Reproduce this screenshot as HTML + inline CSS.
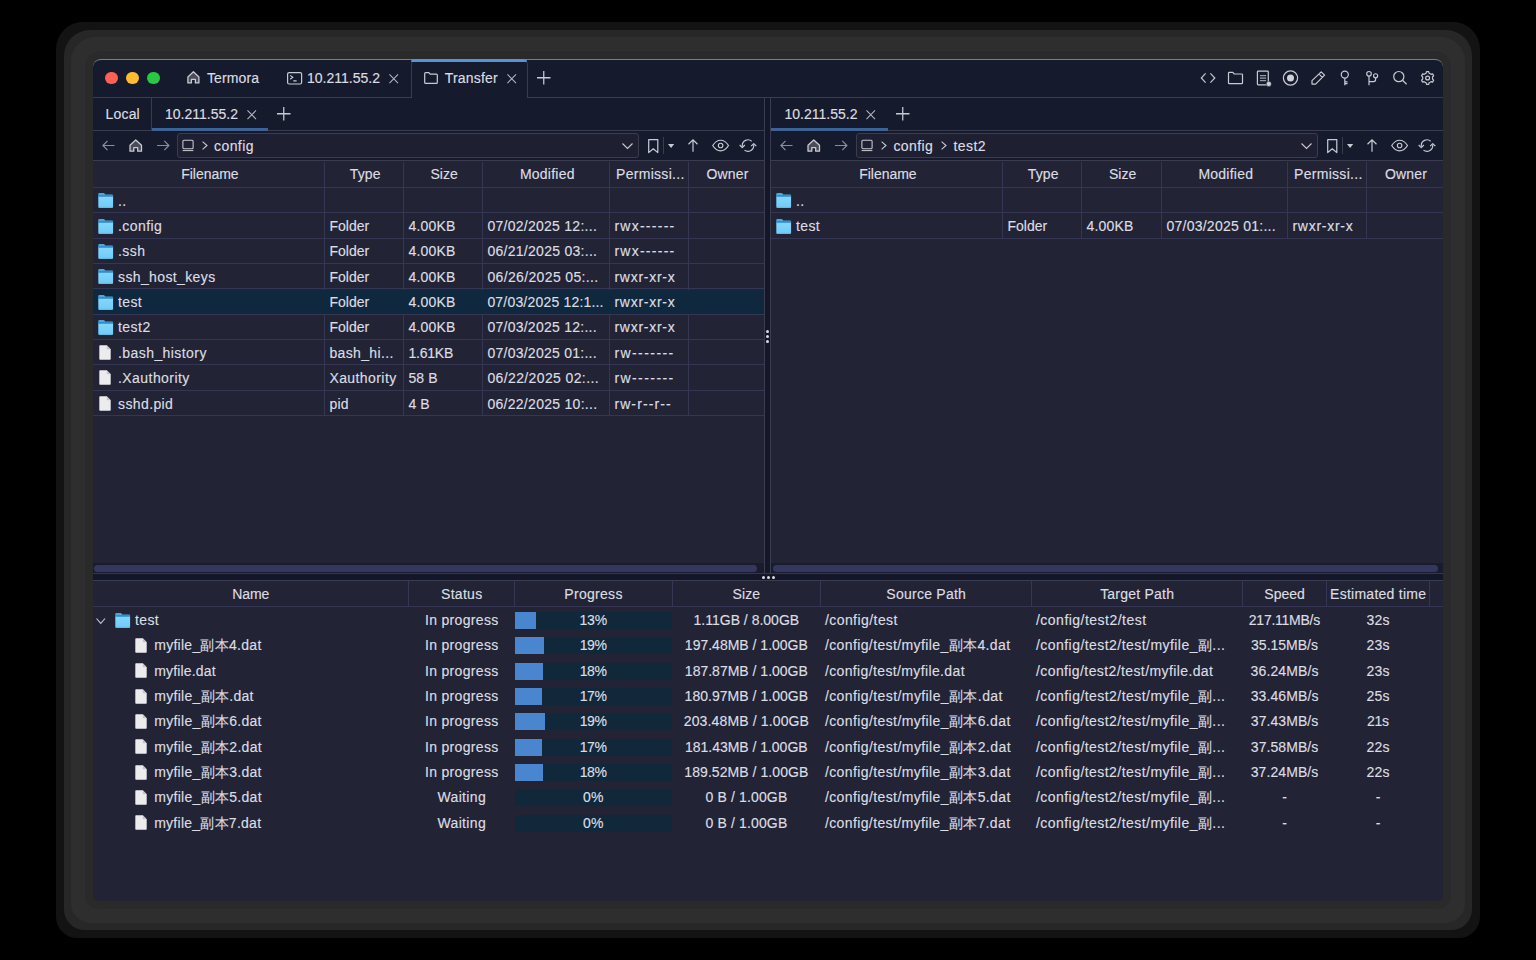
<!DOCTYPE html><html><head><meta charset="utf-8"><style>
*{margin:0;padding:0;box-sizing:border-box}
html,body{width:1536px;height:960px;background:#000;overflow:hidden}
body{position:relative;font-family:"Liberation Sans", sans-serif;font-size:14px;color:#dcdde2}
.a{position:absolute}
.t{position:absolute;white-space:nowrap;line-height:16px;height:16px;-webkit-text-stroke:0.15px #dcdde2}
.c{text-align:center}
svg{position:absolute;overflow:visible}
.hl{position:absolute;height:1px;background:#3a3c50}
.vl{position:absolute;width:1px;background:#3a3c50}
.gl{position:absolute;height:1px;background:#343653}
.gv{position:absolute;width:1px;background:#343653}
</style></head><body><svg style="position:absolute;left:0;top:0" width="0" height="0"><defs><linearGradient id="fg" x1="0" y1="0" x2="0" y2="1"><stop offset="0" stop-color="#82d7fc"/><stop offset="0.85" stop-color="#74cdf8"/><stop offset="1" stop-color="#58b6ea"/></linearGradient></defs></svg><div class="a" style="left:93px;top:59px;width:1350px;height:841.7px;border-radius:8px 8px 6px 6px;box-shadow:0 0 0 8px #2a2a2a,0 0 0 22px #2e2e2e,0 0 0 29px #272727,0 0 0 37px #131313"></div><div class="a" style="left:93px;top:59px;width:1350px;height:841.7px;border-radius:8px 8px 6px 6px;background:#222435"></div><div class="a" style="left:93px;top:59px;width:1350px;height:38px;border-radius:8px 8px 0 0;background:#161a2d;border-top:1px solid #7a7c8e"></div><div class="a" style="left:93px;top:97px;width:1350px;height:1px;background:#3a3c50;"></div><div class="a" style="left:105.2px;top:71.5px;width:12.6px;height:12.6px;border-radius:50%;background:#fe5f57"></div><div class="a" style="left:126.2px;top:71.5px;width:12.6px;height:12.6px;border-radius:50%;background:#febc2e"></div><div class="a" style="left:147.2px;top:71.5px;width:12.6px;height:12.6px;border-radius:50%;background:#28c840"></div><svg style="left:187.3px;top:71.4px" width="13" height="13" viewBox="0 0 13 13"><path d="M0.9 5.9 L6.4 0.8 L11.9 5.9 V11.9 H8.4 V8.4 H4.4 V11.9 H0.9 Z" fill="#4a4c5a" stroke="#c9cad2" stroke-width="1.3" stroke-linejoin="round"/></svg><div class="t" style="left:207px;top:70.3px;letter-spacing:0.12px;">Termora</div><svg style="left:286.7px;top:71.6px" width="16" height="13" viewBox="0 0 16 13"><rect x="0.6" y="0.6" width="14" height="11.4" rx="1.5" fill="none" stroke="#c9cad2" stroke-width="1.2"/><path d="M3.2 3.4 L5.8 5.3 L3.2 7.2 M6.3 8.9 H9.6" fill="none" stroke="#c9cad2" stroke-width="1.1"/></svg><div class="t" style="left:307px;top:70.3px;">10.211.55.2</div><svg style="left:388.8px;top:74.2px" width="9.5" height="9.5" viewBox="0 0 10 10"><path d="M0.5 0.5 L9.5 9.5 M9.5 0.5 L0.5 9.5" stroke="#b5b6bf" stroke-width="1.1"/></svg><div class="a" style="left:410.5px;top:59px;width:117px;height:39px;background:#161a2d;border-left:1px solid #3a3c50;border-right:1px solid #3a3c50;border-radius:6px 6px 0 0"></div><div class="a" style="left:411px;top:59px;width:116px;height:3px;background:#5a92d8;border-radius:4px 4px 0 0"></div><svg style="left:424px;top:72px" width="14" height="12" viewBox="0 0 14 12"><path d="M0.7 1.6 Q0.7 0.7 1.6 0.7 H4.8 L6.2 2.2 H12.4 Q13.3 2.2 13.3 3.1 V10.4 Q13.3 11.3 12.4 11.3 H1.6 Q0.7 11.3 0.7 10.4 Z" fill="none" stroke="#c9cad2" stroke-width="1.2"/></svg><div class="t" style="left:444.8px;top:70.3px;letter-spacing:0.19px;">Transfer</div><svg style="left:506.8px;top:74.2px" width="9.5" height="9.5" viewBox="0 0 10 10"><path d="M0.5 0.5 L9.5 9.5 M9.5 0.5 L0.5 9.5" stroke="#b5b6bf" stroke-width="1.1"/></svg><svg style="left:537.2px;top:70.8px" width="13.5" height="13.5" viewBox="0 0 14 14"><path d="M7 0 V14 M0 7 H14" stroke="#c9cad2" stroke-width="1.3"/></svg><svg style="left:1310.7px;top:70.8px" width="14.5" height="14" viewBox="0 0 14.5 14"><path d="M10.2 0.9 L13.6 4.1 L4.6 13.1 H1 V9.6 Z M8 3.1 L11.4 6.4" fill="none" stroke="#c9cad2" stroke-width="1.2" stroke-linejoin="round"/></svg><div class="a" style="left:93px;top:98px;width:671px;height:32.5px;background:#161a2d;"></div><div class="a" style="left:93px;top:130px;width:671px;height:1px;background:#3a3c50;"></div><div class="t" style="left:105.5px;top:106.3px;letter-spacing:0.19px;">Local</div><div class="a" style="left:151px;top:98px;width:1px;height:32.5px;background:#3a3c50;"></div><div class="t" style="left:165.0px;top:106.3px;">10.211.55.2</div><svg style="left:246.5px;top:109.8px" width="9.5" height="9.5" viewBox="0 0 10 10"><path d="M0.5 0.5 L9.5 9.5 M9.5 0.5 L0.5 9.5" stroke="#b5b6bf" stroke-width="1.1"/></svg><div class="a" style="left:151.5px;top:127.5px;width:116.5px;height:3px;background:#3b6396;"></div><svg style="left:276.5px;top:106.5px" width="13.5" height="13.5" viewBox="0 0 14 14"><path d="M7 0 V14 M0 7 H14" stroke="#c9cad2" stroke-width="1.3"/></svg><div class="a" style="left:93px;top:131px;width:671px;height:29px;background:#161a2d;"></div><div class="a" style="left:93px;top:160px;width:671px;height:1px;background:#3a3c50;"></div><svg style="left:102px;top:140px" width="13" height="11" viewBox="0 0 13 11"><path d="M12.5 5.5 H1 M5.5 0.8 L0.9 5.5 L5.5 10.2" fill="none" stroke="#8b8d99" stroke-width="1.2"/></svg><svg style="left:129px;top:139px" width="13.5" height="13" viewBox="0 0 13.5 13"><path d="M1 6.2 L6.75 0.9 L12.5 6.2 V12.2 H8.7 V8.7 H4.8 V12.2 H1 Z" fill="#4a4c5a" stroke="#c9cad2" stroke-width="1.3" stroke-linejoin="round"/></svg><svg style="left:157px;top:140px" width="13" height="11" viewBox="0 0 13 11"><path d="M0 5.5 H11.8 M7.3 0.8 L11.9 5.5 L7.3 10.2" fill="none" stroke="#8b8d99" stroke-width="1.2"/></svg><div class="a" style="left:177px;top:133px;width:462px;height:25px;background:#1e2032;border:1px solid #3a3c50;border-radius:3px"></div><svg style="left:182px;top:140px" width="12" height="11.5" viewBox="0 0 12 11.5"><rect x="0.9" y="0.3" width="10.2" height="8.4" rx="1" fill="none" stroke="#c9cad2" stroke-width="1.05"/><path d="M0.6 10.6 H11.4" stroke="#c9cad2" stroke-width="1"/></svg><svg style="left:201.5px;top:141px" width="6" height="9" viewBox="0 0 6 9"><path d="M0.6 0.6 L5 4.5 L0.6 8.4" fill="none" stroke="#c9cad2" stroke-width="1.1"/></svg><div class="t" style="left:214.0px;top:137.8px;letter-spacing:0.42px;">config</div><svg style="left:621.5px;top:142.6px" width="11" height="6" viewBox="0 0 11 6"><path d="M0.5 0.5 L5.5 5.5 L10.5 0.5" fill="none" stroke="#c9cad2" stroke-width="1.1"/></svg><svg style="left:647.6px;top:138.9px" width="10.5" height="14.3" viewBox="0 0 10.5 14.3"><path d="M0.7 0.7 H9.8 V13.6 L5.25 9.8 L0.7 13.6 Z" fill="none" stroke="#c9cad2" stroke-width="1.2" stroke-linejoin="round"/></svg><div class="a" style="left:663.2px;top:136.6px;width:1px;height:17.7px;background:#3a3c50;"></div><svg style="left:667.7px;top:144.4px" width="6.2" height="4" viewBox="0 0 6.2 4"><path d="M0 0 H6.2 L3.1 4 Z" fill="#c9cad2"/></svg><svg style="left:688px;top:139.4px" width="10" height="12.7" viewBox="0 0 10 12.7"><path d="M5 12.7 V1 M0.5 5.3 L5 0.8 L9.5 5.3" fill="none" stroke="#c9cad2" stroke-width="1.2"/></svg><div class="a" style="left:93px;top:187px;width:671px;height:1px;background:#343653;"></div><div class="t c" style="left:94.2px;top:166.3px;letter-spacing:-0.03px;text-indent:-0.03px;width:231.5px;">Filename</div><div class="t c" style="left:325.7px;top:166.3px;letter-spacing:0.10px;text-indent:0.10px;width:79.0px;">Type</div><div class="t c" style="left:404.7px;top:166.3px;letter-spacing:0.07px;text-indent:0.07px;width:79.0px;">Size</div><div class="t c" style="left:483.7px;top:166.3px;letter-spacing:0.24px;text-indent:0.24px;width:127.0px;">Modified</div><div class="t c" style="left:610.7px;top:166.3px;letter-spacing:0.30px;text-indent:0.30px;width:79.0px;">Permissi...</div><div class="t c" style="left:689.7px;top:166.3px;letter-spacing:0.13px;text-indent:0.13px;width:75.5px;">Owner</div><div class="a" style="left:324.0px;top:161.5px;width:1px;height:253.95000000000005px;background:#343653;"></div><div class="a" style="left:403.0px;top:161.5px;width:1px;height:253.95000000000005px;background:#343653;"></div><div class="a" style="left:482.0px;top:161.5px;width:1px;height:253.95000000000005px;background:#343653;"></div><div class="a" style="left:609.0px;top:161.5px;width:1px;height:253.95000000000005px;background:#343653;"></div><div class="a" style="left:688.0px;top:161.5px;width:1px;height:253.95000000000005px;background:#343653;"></div><div class="a" style="left:93px;top:212.15px;width:671px;height:1px;background:#343653;"></div><svg style="left:97.7px;top:193.3px" width="15.4" height="15" viewBox="0 0 15.4 15"><path d="M0.3 1.1 Q0.3 0.1 1.3 0.1 H5.6 Q6.1 0.1 6.5 0.6 L7.3 1.5 H14.1 Q15.1 1.5 15.1 2.5 V4 H0.3 Z" fill="#4ea6de"/><rect x="0.3" y="2.2" width="14.8" height="1.7" fill="#2a87cb"/><path d="M0.3 3.8 H15.1 V13.9 Q15.1 14.9 14.1 14.9 H1.3 Q0.3 14.9 0.3 13.9 Z" fill="url(#fg)"/></svg><div class="t" style="left:118px;top:192.70000000000002px;letter-spacing:0.30px;">..</div><div class="t" style="left:329.4px;top:192.70000000000002px;"></div><div class="t" style="left:408.4px;top:192.70000000000002px;"></div><div class="t" style="left:487.4px;top:192.70000000000002px;"></div><div class="t" style="left:614.4px;top:192.70000000000002px;"></div><div class="t" style="left:693.4px;top:192.70000000000002px;"></div><div class="a" style="left:93px;top:237.5px;width:671px;height:1px;background:#343653;"></div><svg style="left:97.7px;top:218.65px" width="15.4" height="15" viewBox="0 0 15.4 15"><path d="M0.3 1.1 Q0.3 0.1 1.3 0.1 H5.6 Q6.1 0.1 6.5 0.6 L7.3 1.5 H14.1 Q15.1 1.5 15.1 2.5 V4 H0.3 Z" fill="#4ea6de"/><rect x="0.3" y="2.2" width="14.8" height="1.7" fill="#2a87cb"/><path d="M0.3 3.8 H15.1 V13.9 Q15.1 14.9 14.1 14.9 H1.3 Q0.3 14.9 0.3 13.9 Z" fill="url(#fg)"/></svg><div class="t" style="left:118px;top:218.05px;letter-spacing:0.44px;">.config</div><div class="t" style="left:329.4px;top:218.05px;letter-spacing:0.03px;">Folder</div><div class="t" style="left:408.4px;top:218.05px;letter-spacing:0.22px;">4.00KB</div><div class="t" style="left:487.4px;top:218.05px;letter-spacing:0.27px;">07/02/2025 12:...</div><div class="t" style="left:614.4px;top:218.05px;letter-spacing:1.26px;">rwx------</div><div class="t" style="left:693.4px;top:218.05px;"></div><div class="a" style="left:93px;top:262.85px;width:671px;height:1px;background:#343653;"></div><svg style="left:97.7px;top:244.0px" width="15.4" height="15" viewBox="0 0 15.4 15"><path d="M0.3 1.1 Q0.3 0.1 1.3 0.1 H5.6 Q6.1 0.1 6.5 0.6 L7.3 1.5 H14.1 Q15.1 1.5 15.1 2.5 V4 H0.3 Z" fill="#4ea6de"/><rect x="0.3" y="2.2" width="14.8" height="1.7" fill="#2a87cb"/><path d="M0.3 3.8 H15.1 V13.9 Q15.1 14.9 14.1 14.9 H1.3 Q0.3 14.9 0.3 13.9 Z" fill="url(#fg)"/></svg><div class="t" style="left:118px;top:243.39999999999998px;letter-spacing:0.43px;">.ssh</div><div class="t" style="left:329.4px;top:243.39999999999998px;letter-spacing:0.03px;">Folder</div><div class="t" style="left:408.4px;top:243.39999999999998px;letter-spacing:0.22px;">4.00KB</div><div class="t" style="left:487.4px;top:243.39999999999998px;letter-spacing:0.28px;">06/21/2025 03:...</div><div class="t" style="left:614.4px;top:243.39999999999998px;letter-spacing:1.26px;">rwx------</div><div class="t" style="left:693.4px;top:243.39999999999998px;"></div><div class="a" style="left:93px;top:288.20000000000005px;width:671px;height:1px;background:#343653;"></div><svg style="left:97.7px;top:269.35px" width="15.4" height="15" viewBox="0 0 15.4 15"><path d="M0.3 1.1 Q0.3 0.1 1.3 0.1 H5.6 Q6.1 0.1 6.5 0.6 L7.3 1.5 H14.1 Q15.1 1.5 15.1 2.5 V4 H0.3 Z" fill="#4ea6de"/><rect x="0.3" y="2.2" width="14.8" height="1.7" fill="#2a87cb"/><path d="M0.3 3.8 H15.1 V13.9 Q15.1 14.9 14.1 14.9 H1.3 Q0.3 14.9 0.3 13.9 Z" fill="url(#fg)"/></svg><div class="t" style="left:118px;top:268.75px;letter-spacing:0.38px;">ssh_host_keys</div><div class="t" style="left:329.4px;top:268.75px;letter-spacing:0.03px;">Folder</div><div class="t" style="left:408.4px;top:268.75px;letter-spacing:0.22px;">4.00KB</div><div class="t" style="left:487.4px;top:268.75px;letter-spacing:0.36px;">06/26/2025 05:...</div><div class="t" style="left:614.4px;top:268.75px;letter-spacing:0.74px;">rwxr-xr-x</div><div class="t" style="left:693.4px;top:268.75px;"></div><div class="a" style="left:93px;top:289.50000000000006px;width:671px;height:24.55px;background:#0f283d;"></div><div class="a" style="left:93px;top:313.55000000000007px;width:671px;height:1px;background:#343653;"></div><svg style="left:97.7px;top:294.70000000000005px" width="15.4" height="15" viewBox="0 0 15.4 15"><path d="M0.3 1.1 Q0.3 0.1 1.3 0.1 H5.6 Q6.1 0.1 6.5 0.6 L7.3 1.5 H14.1 Q15.1 1.5 15.1 2.5 V4 H0.3 Z" fill="#4ea6de"/><rect x="0.3" y="2.2" width="14.8" height="1.7" fill="#2a87cb"/><path d="M0.3 3.8 H15.1 V13.9 Q15.1 14.9 14.1 14.9 H1.3 Q0.3 14.9 0.3 13.9 Z" fill="url(#fg)"/></svg><div class="t" style="left:118px;top:294.1px;letter-spacing:0.35px;">test</div><div class="t" style="left:329.4px;top:294.1px;letter-spacing:0.03px;">Folder</div><div class="t" style="left:408.4px;top:294.1px;letter-spacing:0.22px;">4.00KB</div><div class="t" style="left:487.4px;top:294.1px;letter-spacing:0.19px;">07/03/2025 12:1...</div><div class="t" style="left:614.4px;top:294.1px;letter-spacing:0.74px;">rwxr-xr-x</div><div class="t" style="left:693.4px;top:294.1px;"></div><div class="a" style="left:93px;top:338.90000000000003px;width:671px;height:1px;background:#343653;"></div><svg style="left:97.7px;top:320.05px" width="15.4" height="15" viewBox="0 0 15.4 15"><path d="M0.3 1.1 Q0.3 0.1 1.3 0.1 H5.6 Q6.1 0.1 6.5 0.6 L7.3 1.5 H14.1 Q15.1 1.5 15.1 2.5 V4 H0.3 Z" fill="#4ea6de"/><rect x="0.3" y="2.2" width="14.8" height="1.7" fill="#2a87cb"/><path d="M0.3 3.8 H15.1 V13.9 Q15.1 14.9 14.1 14.9 H1.3 Q0.3 14.9 0.3 13.9 Z" fill="url(#fg)"/></svg><div class="t" style="left:118px;top:319.45px;letter-spacing:0.46px;">test2</div><div class="t" style="left:329.4px;top:319.45px;letter-spacing:0.03px;">Folder</div><div class="t" style="left:408.4px;top:319.45px;letter-spacing:0.22px;">4.00KB</div><div class="t" style="left:487.4px;top:319.45px;letter-spacing:0.26px;">07/03/2025 12:...</div><div class="t" style="left:614.4px;top:319.45px;letter-spacing:0.74px;">rwxr-xr-x</div><div class="t" style="left:693.4px;top:319.45px;"></div><div class="a" style="left:93px;top:364.25000000000006px;width:671px;height:1px;background:#343653;"></div><svg style="left:99.2px;top:344.90000000000003px" width="12" height="15" viewBox="0 0 12 15"><path d="M0.3 1 Q0.3 0.3 1 0.3 H7.8 L11.7 4.2 V14 Q11.7 14.7 11 14.7 H1 Q0.3 14.7 0.3 14 Z" fill="#ececef"/><path d="M7.8 0.3 V3.6 Q7.8 4.2 8.4 4.2 H11.7" fill="#c4c4c8"/></svg><div class="t" style="left:118px;top:344.8px;letter-spacing:0.43px;">.bash_history</div><div class="t" style="left:329.4px;top:344.8px;letter-spacing:0.36px;">bash_hi...</div><div class="t" style="left:408.4px;top:344.8px;letter-spacing:-0.22px;">1.61KB</div><div class="t" style="left:487.4px;top:344.8px;letter-spacing:0.26px;">07/03/2025 01:...</div><div class="t" style="left:614.4px;top:344.8px;letter-spacing:1.43px;">rw-------</div><div class="t" style="left:693.4px;top:344.8px;"></div><div class="a" style="left:93px;top:389.6px;width:671px;height:1px;background:#343653;"></div><svg style="left:99.2px;top:370.25px" width="12" height="15" viewBox="0 0 12 15"><path d="M0.3 1 Q0.3 0.3 1 0.3 H7.8 L11.7 4.2 V14 Q11.7 14.7 11 14.7 H1 Q0.3 14.7 0.3 14 Z" fill="#ececef"/><path d="M7.8 0.3 V3.6 Q7.8 4.2 8.4 4.2 H11.7" fill="#c4c4c8"/></svg><div class="t" style="left:118px;top:370.15px;letter-spacing:0.44px;">.Xauthority</div><div class="t" style="left:329.4px;top:370.15px;letter-spacing:0.42px;">Xauthority</div><div class="t" style="left:408.4px;top:370.15px;letter-spacing:0.14px;">58 B</div><div class="t" style="left:487.4px;top:370.15px;letter-spacing:0.38px;">06/22/2025 02:...</div><div class="t" style="left:614.4px;top:370.15px;letter-spacing:1.43px;">rw-------</div><div class="t" style="left:693.4px;top:370.15px;"></div><div class="a" style="left:93px;top:414.95000000000005px;width:671px;height:1px;background:#343653;"></div><svg style="left:99.2px;top:395.6px" width="12" height="15" viewBox="0 0 12 15"><path d="M0.3 1 Q0.3 0.3 1 0.3 H7.8 L11.7 4.2 V14 Q11.7 14.7 11 14.7 H1 Q0.3 14.7 0.3 14 Z" fill="#ececef"/><path d="M7.8 0.3 V3.6 Q7.8 4.2 8.4 4.2 H11.7" fill="#c4c4c8"/></svg><div class="t" style="left:118px;top:395.5px;letter-spacing:0.39px;">sshd.pid</div><div class="t" style="left:329.4px;top:395.5px;letter-spacing:0.27px;">pid</div><div class="t" style="left:408.4px;top:395.5px;letter-spacing:0.10px;">4 B</div><div class="t" style="left:487.4px;top:395.5px;letter-spacing:0.29px;">06/22/2025 10:...</div><div class="t" style="left:614.4px;top:395.5px;letter-spacing:1.10px;">rw-r--r--</div><div class="t" style="left:693.4px;top:395.5px;"></div><div class="a" style="left:771px;top:98px;width:672px;height:32.5px;background:#161a2d;"></div><div class="a" style="left:771px;top:130px;width:672px;height:1px;background:#3a3c50;"></div><div class="t" style="left:784.5px;top:106.3px;">10.211.55.2</div><svg style="left:866px;top:109.8px" width="9.5" height="9.5" viewBox="0 0 10 10"><path d="M0.5 0.5 L9.5 9.5 M9.5 0.5 L0.5 9.5" stroke="#b5b6bf" stroke-width="1.1"/></svg><div class="a" style="left:771px;top:127.5px;width:116.5px;height:3px;background:#3b6396;"></div><svg style="left:896px;top:106.5px" width="13.5" height="13.5" viewBox="0 0 14 14"><path d="M7 0 V14 M0 7 H14" stroke="#c9cad2" stroke-width="1.3"/></svg><div class="a" style="left:771px;top:131px;width:672px;height:29px;background:#161a2d;"></div><div class="a" style="left:771px;top:160px;width:672px;height:1px;background:#3a3c50;"></div><svg style="left:780px;top:140px" width="13" height="11" viewBox="0 0 13 11"><path d="M12.5 5.5 H1 M5.5 0.8 L0.9 5.5 L5.5 10.2" fill="none" stroke="#8b8d99" stroke-width="1.2"/></svg><svg style="left:807px;top:139px" width="13.5" height="13" viewBox="0 0 13.5 13"><path d="M1 6.2 L6.75 0.9 L12.5 6.2 V12.2 H8.7 V8.7 H4.8 V12.2 H1 Z" fill="#4a4c5a" stroke="#c9cad2" stroke-width="1.3" stroke-linejoin="round"/></svg><svg style="left:835px;top:140px" width="13" height="11" viewBox="0 0 13 11"><path d="M0 5.5 H11.8 M7.3 0.8 L11.9 5.5 L7.3 10.2" fill="none" stroke="#8b8d99" stroke-width="1.2"/></svg><div class="a" style="left:856.4px;top:133px;width:461.6px;height:25px;background:#1e2032;border:1px solid #3a3c50;border-radius:3px"></div><svg style="left:861.4px;top:140px" width="12" height="11.5" viewBox="0 0 12 11.5"><rect x="0.9" y="0.3" width="10.2" height="8.4" rx="1" fill="none" stroke="#c9cad2" stroke-width="1.05"/><path d="M0.6 10.6 H11.4" stroke="#c9cad2" stroke-width="1"/></svg><svg style="left:880.9px;top:141px" width="6" height="9" viewBox="0 0 6 9"><path d="M0.6 0.6 L5 4.5 L0.6 8.4" fill="none" stroke="#c9cad2" stroke-width="1.1"/></svg><div class="t" style="left:893.4px;top:137.8px;letter-spacing:0.42px;">config</div><svg style="left:940.9px;top:141px" width="6" height="9" viewBox="0 0 6 9"><path d="M0.6 0.6 L5 4.5 L0.6 8.4" fill="none" stroke="#c9cad2" stroke-width="1.1"/></svg><div class="t" style="left:953.4px;top:137.8px;letter-spacing:0.46px;">test2</div><svg style="left:1300.5px;top:142.6px" width="11" height="6" viewBox="0 0 11 6"><path d="M0.5 0.5 L5.5 5.5 L10.5 0.5" fill="none" stroke="#c9cad2" stroke-width="1.1"/></svg><svg style="left:1326.6px;top:138.9px" width="10.5" height="14.3" viewBox="0 0 10.5 14.3"><path d="M0.7 0.7 H9.8 V13.6 L5.25 9.8 L0.7 13.6 Z" fill="none" stroke="#c9cad2" stroke-width="1.2" stroke-linejoin="round"/></svg><div class="a" style="left:1342.2px;top:136.6px;width:1px;height:17.7px;background:#3a3c50;"></div><svg style="left:1346.7px;top:144.4px" width="6.2" height="4" viewBox="0 0 6.2 4"><path d="M0 0 H6.2 L3.1 4 Z" fill="#c9cad2"/></svg><svg style="left:1367px;top:139.4px" width="10" height="12.7" viewBox="0 0 10 12.7"><path d="M5 12.7 V1 M0.5 5.3 L5 0.8 L9.5 5.3" fill="none" stroke="#c9cad2" stroke-width="1.2"/></svg><div class="a" style="left:771px;top:187px;width:672px;height:1px;background:#343653;"></div><div class="t c" style="left:772.2px;top:166.3px;letter-spacing:-0.03px;text-indent:-0.03px;width:231.5px;">Filename</div><div class="t c" style="left:1003.7px;top:166.3px;letter-spacing:0.10px;text-indent:0.10px;width:79.0px;">Type</div><div class="t c" style="left:1082.7px;top:166.3px;letter-spacing:0.07px;text-indent:0.07px;width:80.0px;">Size</div><div class="t c" style="left:1162.7px;top:166.3px;letter-spacing:0.24px;text-indent:0.24px;width:126.0px;">Modified</div><div class="t c" style="left:1288.7px;top:166.3px;letter-spacing:0.30px;text-indent:0.30px;width:79.0px;">Permissi...</div><div class="t c" style="left:1367.7px;top:166.3px;letter-spacing:0.13px;text-indent:0.13px;width:76.5px;">Owner</div><div class="a" style="left:1002.0px;top:161.5px;width:1px;height:76.5px;background:#343653;"></div><div class="a" style="left:1081.0px;top:161.5px;width:1px;height:76.5px;background:#343653;"></div><div class="a" style="left:1161.0px;top:161.5px;width:1px;height:76.5px;background:#343653;"></div><div class="a" style="left:1287.0px;top:161.5px;width:1px;height:76.5px;background:#343653;"></div><div class="a" style="left:1366.0px;top:161.5px;width:1px;height:76.5px;background:#343653;"></div><div class="a" style="left:771px;top:212.15px;width:672px;height:1px;background:#343653;"></div><svg style="left:775.7px;top:193.3px" width="15.4" height="15" viewBox="0 0 15.4 15"><path d="M0.3 1.1 Q0.3 0.1 1.3 0.1 H5.6 Q6.1 0.1 6.5 0.6 L7.3 1.5 H14.1 Q15.1 1.5 15.1 2.5 V4 H0.3 Z" fill="#4ea6de"/><rect x="0.3" y="2.2" width="14.8" height="1.7" fill="#2a87cb"/><path d="M0.3 3.8 H15.1 V13.9 Q15.1 14.9 14.1 14.9 H1.3 Q0.3 14.9 0.3 13.9 Z" fill="url(#fg)"/></svg><div class="t" style="left:796px;top:192.70000000000002px;letter-spacing:0.30px;">..</div><div class="t" style="left:1007.4px;top:192.70000000000002px;"></div><div class="t" style="left:1086.4px;top:192.70000000000002px;"></div><div class="t" style="left:1166.4px;top:192.70000000000002px;"></div><div class="t" style="left:1292.4px;top:192.70000000000002px;"></div><div class="t" style="left:1371.4px;top:192.70000000000002px;"></div><div class="a" style="left:771px;top:237.5px;width:672px;height:1px;background:#343653;"></div><svg style="left:775.7px;top:218.65px" width="15.4" height="15" viewBox="0 0 15.4 15"><path d="M0.3 1.1 Q0.3 0.1 1.3 0.1 H5.6 Q6.1 0.1 6.5 0.6 L7.3 1.5 H14.1 Q15.1 1.5 15.1 2.5 V4 H0.3 Z" fill="#4ea6de"/><rect x="0.3" y="2.2" width="14.8" height="1.7" fill="#2a87cb"/><path d="M0.3 3.8 H15.1 V13.9 Q15.1 14.9 14.1 14.9 H1.3 Q0.3 14.9 0.3 13.9 Z" fill="url(#fg)"/></svg><div class="t" style="left:796px;top:218.05px;letter-spacing:0.35px;">test</div><div class="t" style="left:1007.4px;top:218.05px;letter-spacing:0.03px;">Folder</div><div class="t" style="left:1086.4px;top:218.05px;letter-spacing:0.22px;">4.00KB</div><div class="t" style="left:1166.4px;top:218.05px;letter-spacing:0.26px;">07/03/2025 01:...</div><div class="t" style="left:1292.4px;top:218.05px;letter-spacing:0.74px;">rwxr-xr-x</div><div class="t" style="left:1371.4px;top:218.05px;"></div><div class="a" style="left:764px;top:98px;width:7px;height:476px;background:#14162a;"></div><div class="a" style="left:764px;top:98px;width:1px;height:476px;background:#3a3c50;"></div><div class="a" style="left:770px;top:98px;width:1px;height:476px;background:#3a3c50;"></div><div class="a" style="left:766.0px;top:329.5px;width:3px;height:3px;border-radius:50%;background:#dcdce0"></div><div class="a" style="left:766.0px;top:334.9px;width:3px;height:3px;border-radius:50%;background:#dcdce0"></div><div class="a" style="left:766.0px;top:340.0px;width:3px;height:3px;border-radius:50%;background:#dcdce0"></div><div class="a" style="left:93px;top:563px;width:671px;height:10px;background:#1a1c2e;"></div><div class="a" style="left:94.3px;top:564.8px;width:662.8000000000001px;height:7px;border-radius:3.5px;background:#34375f"></div><div class="a" style="left:771px;top:563px;width:672px;height:10px;background:#1a1c2e;"></div><div class="a" style="left:773.4px;top:564.8px;width:664.6px;height:7px;border-radius:3.5px;background:#34375f"></div><div class="a" style="left:93px;top:574px;width:1350px;height:6.5px;background:#14162a;"></div><div class="a" style="left:93px;top:573px;width:1350px;height:1.3px;background:#34364a;"></div><div class="a" style="left:93px;top:580px;width:1350px;height:1px;background:#3a3c50;"></div><div class="a" style="left:761.7px;top:575.7px;width:3px;height:3px;border-radius:50%;background:#dcdce0"></div><div class="a" style="left:766.9px;top:575.7px;width:3px;height:3px;border-radius:50%;background:#dcdce0"></div><div class="a" style="left:772.3px;top:575.7px;width:3px;height:3px;border-radius:50%;background:#dcdce0"></div><div class="a" style="left:93px;top:606px;width:1350px;height:1px;background:#343653;"></div><div class="a" style="left:408.1px;top:581px;width:1px;height:25px;background:#343653;"></div><div class="a" style="left:514.1px;top:581px;width:1px;height:25px;background:#343653;"></div><div class="a" style="left:671.6px;top:581px;width:1px;height:25px;background:#343653;"></div><div class="a" style="left:820.1px;top:581px;width:1px;height:25px;background:#343653;"></div><div class="a" style="left:1031.2px;top:581px;width:1px;height:25px;background:#343653;"></div><div class="a" style="left:1241.9px;top:581px;width:1px;height:25px;background:#343653;"></div><div class="a" style="left:1326.2px;top:581px;width:1px;height:25px;background:#343653;"></div><div class="a" style="left:1428.9px;top:581px;width:1px;height:25px;background:#343653;"></div><div class="t c" style="left:93px;top:586.2px;letter-spacing:-0.11px;text-indent:-0.11px;width:315.6px;">Name</div><div class="t c" style="left:408.6px;top:586.2px;letter-spacing:0.29px;text-indent:0.29px;width:106.0px;">Status</div><div class="t c" style="left:514.6px;top:586.2px;letter-spacing:0.30px;text-indent:0.30px;width:157.5px;">Progress</div><div class="t c" style="left:672.1px;top:586.2px;letter-spacing:0.07px;text-indent:0.07px;width:148.5px;">Size</div><div class="t c" style="left:820.6px;top:586.2px;letter-spacing:0.25px;text-indent:0.25px;width:211.10000000000002px;">Source Path</div><div class="t c" style="left:1031.7px;top:586.2px;letter-spacing:0.22px;text-indent:0.22px;width:210.70000000000005px;">Target Path</div><div class="t c" style="left:1242.4px;top:586.2px;width:84.29999999999995px;">Speed</div><div class="t c" style="left:1326.7px;top:586.2px;letter-spacing:0.26px;text-indent:0.26px;width:102.70000000000005px;">Estimated time</div><svg style="left:96px;top:618.0px" width="9.5" height="6" viewBox="0 0 9.5 6"><path d="M0.5 0.5 L4.75 5.3 L9 0.5" fill="none" stroke="#c9cad2" stroke-width="1.1"/></svg><svg style="left:114.5px;top:612.8px" width="15.4" height="15" viewBox="0 0 15.4 15"><path d="M0.3 1.1 Q0.3 0.1 1.3 0.1 H5.6 Q6.1 0.1 6.5 0.6 L7.3 1.5 H14.1 Q15.1 1.5 15.1 2.5 V4 H0.3 Z" fill="#4ea6de"/><rect x="0.3" y="2.2" width="14.8" height="1.7" fill="#2a87cb"/><path d="M0.3 3.8 H15.1 V13.9 Q15.1 14.9 14.1 14.9 H1.3 Q0.3 14.9 0.3 13.9 Z" fill="url(#fg)"/></svg><div class="t" style="left:135px;top:611.8px;letter-spacing:0.35px;">test</div><div class="t c" style="left:408.6px;top:611.8px;letter-spacing:0.32px;text-indent:0.32px;width:106.0px;">In progress</div><div class="a" style="left:514.6px;top:611.8px;width:157.5px;height:17px;background:#10283a;"></div><div class="a" style="left:514.6px;top:611.8px;width:21.2px;height:17px;background:#4a86cf;"></div><div class="t c" style="left:514.6px;top:611.8px;letter-spacing:-0.27px;text-indent:-0.27px;width:157.5px;">13%</div><div class="t c" style="left:672.1px;top:611.8px;width:148.5px;">1.11GB / 8.00GB</div><div class="t" style="left:824.9px;top:611.8px;letter-spacing:0.44px;">/config/test</div><div class="t" style="left:1036.0px;top:611.8px;letter-spacing:0.48px;">/config/test2/test</div><div class="t c" style="left:1242.4px;top:611.8px;letter-spacing:-0.25px;text-indent:-0.25px;width:84.29999999999995px;">217.11MB/s</div><div class="t c" style="left:1326.7px;top:611.8px;letter-spacing:0.20px;text-indent:0.20px;width:102.70000000000005px;">32s</div><svg style="left:135px;top:637.95px" width="12" height="15" viewBox="0 0 12 15"><path d="M0.3 1 Q0.3 0.3 1 0.3 H7.8 L11.7 4.2 V14 Q11.7 14.7 11 14.7 H1 Q0.3 14.7 0.3 14 Z" fill="#ececef"/><path d="M7.8 0.3 V3.6 Q7.8 4.2 8.4 4.2 H11.7" fill="#c4c4c8"/></svg><div class="t" style="left:154.2px;top:637.15px;letter-spacing:0.28px;">myfile_副本4.dat</div><div class="t c" style="left:408.6px;top:637.15px;letter-spacing:0.32px;text-indent:0.32px;width:106.0px;">In progress</div><div class="a" style="left:514.6px;top:637.15px;width:157.5px;height:17px;background:#10283a;"></div><div class="a" style="left:514.6px;top:637.15px;width:29.2px;height:17px;background:#4a86cf;"></div><div class="t c" style="left:514.6px;top:637.15px;letter-spacing:-0.33px;text-indent:-0.33px;width:157.5px;">19%</div><div class="t c" style="left:672.1px;top:637.15px;width:148.5px;">197.48MB / 1.00GB</div><div class="t" style="left:824.9px;top:637.15px;letter-spacing:0.39px;">/config/test/myfile_副本4.dat</div><div class="t" style="left:1036.0px;top:637.15px;letter-spacing:0.45px;">/config/test2/test/myfile_副...</div><div class="t c" style="left:1242.4px;top:637.15px;width:84.29999999999995px;">35.15MB/s</div><div class="t c" style="left:1326.7px;top:637.15px;letter-spacing:0.20px;text-indent:0.20px;width:102.70000000000005px;">23s</div><svg style="left:135px;top:663.3000000000001px" width="12" height="15" viewBox="0 0 12 15"><path d="M0.3 1 Q0.3 0.3 1 0.3 H7.8 L11.7 4.2 V14 Q11.7 14.7 11 14.7 H1 Q0.3 14.7 0.3 14 Z" fill="#ececef"/><path d="M7.8 0.3 V3.6 Q7.8 4.2 8.4 4.2 H11.7" fill="#c4c4c8"/></svg><div class="t" style="left:154.2px;top:662.5px;letter-spacing:0.16px;">myfile.dat</div><div class="t c" style="left:408.6px;top:662.5px;letter-spacing:0.32px;text-indent:0.32px;width:106.0px;">In progress</div><div class="a" style="left:514.6px;top:662.5px;width:157.5px;height:17px;background:#10283a;"></div><div class="a" style="left:514.6px;top:662.5px;width:28px;height:17px;background:#4a86cf;"></div><div class="t c" style="left:514.6px;top:662.5px;letter-spacing:-0.33px;text-indent:-0.33px;width:157.5px;">18%</div><div class="t c" style="left:672.1px;top:662.5px;width:148.5px;">187.87MB / 1.00GB</div><div class="t" style="left:824.9px;top:662.5px;letter-spacing:0.37px;">/config/test/myfile.dat</div><div class="t" style="left:1036.0px;top:662.5px;letter-spacing:0.40px;">/config/test2/test/myfile.dat</div><div class="t c" style="left:1242.4px;top:662.5px;letter-spacing:0.13px;text-indent:0.13px;width:84.29999999999995px;">36.24MB/s</div><div class="t c" style="left:1326.7px;top:662.5px;letter-spacing:0.20px;text-indent:0.20px;width:102.70000000000005px;">23s</div><svg style="left:135px;top:688.65px" width="12" height="15" viewBox="0 0 12 15"><path d="M0.3 1 Q0.3 0.3 1 0.3 H7.8 L11.7 4.2 V14 Q11.7 14.7 11 14.7 H1 Q0.3 14.7 0.3 14 Z" fill="#ececef"/><path d="M7.8 0.3 V3.6 Q7.8 4.2 8.4 4.2 H11.7" fill="#c4c4c8"/></svg><div class="t" style="left:154.2px;top:687.8499999999999px;letter-spacing:0.30px;">myfile_副本.dat</div><div class="t c" style="left:408.6px;top:687.8499999999999px;letter-spacing:0.32px;text-indent:0.32px;width:106.0px;">In progress</div><div class="a" style="left:514.6px;top:687.8499999999999px;width:157.5px;height:17px;background:#10283a;"></div><div class="a" style="left:514.6px;top:687.8499999999999px;width:27px;height:17px;background:#4a86cf;"></div><div class="t c" style="left:514.6px;top:687.8499999999999px;letter-spacing:-0.40px;text-indent:-0.40px;width:157.5px;">17%</div><div class="t c" style="left:672.1px;top:687.8499999999999px;letter-spacing:0.03px;text-indent:0.03px;width:148.5px;">180.97MB / 1.00GB</div><div class="t" style="left:824.9px;top:687.8499999999999px;letter-spacing:0.41px;">/config/test/myfile_副本.dat</div><div class="t" style="left:1036.0px;top:687.8499999999999px;letter-spacing:0.45px;">/config/test2/test/myfile_副...</div><div class="t c" style="left:1242.4px;top:687.8499999999999px;letter-spacing:0.11px;text-indent:0.11px;width:84.29999999999995px;">33.46MB/s</div><div class="t c" style="left:1326.7px;top:687.8499999999999px;letter-spacing:0.22px;text-indent:0.22px;width:102.70000000000005px;">25s</div><svg style="left:135px;top:714.0px" width="12" height="15" viewBox="0 0 12 15"><path d="M0.3 1 Q0.3 0.3 1 0.3 H7.8 L11.7 4.2 V14 Q11.7 14.7 11 14.7 H1 Q0.3 14.7 0.3 14 Z" fill="#ececef"/><path d="M7.8 0.3 V3.6 Q7.8 4.2 8.4 4.2 H11.7" fill="#c4c4c8"/></svg><div class="t" style="left:154.2px;top:713.1999999999999px;letter-spacing:0.29px;">myfile_副本6.dat</div><div class="t c" style="left:408.6px;top:713.1999999999999px;letter-spacing:0.32px;text-indent:0.32px;width:106.0px;">In progress</div><div class="a" style="left:514.6px;top:713.1999999999999px;width:157.5px;height:17px;background:#10283a;"></div><div class="a" style="left:514.6px;top:713.1999999999999px;width:30px;height:17px;background:#4a86cf;"></div><div class="t c" style="left:514.6px;top:713.1999999999999px;letter-spacing:-0.33px;text-indent:-0.33px;width:157.5px;">19%</div><div class="t c" style="left:672.1px;top:713.1999999999999px;letter-spacing:0.14px;text-indent:0.14px;width:148.5px;">203.48MB / 1.00GB</div><div class="t" style="left:824.9px;top:713.1999999999999px;letter-spacing:0.40px;">/config/test/myfile_副本6.dat</div><div class="t" style="left:1036.0px;top:713.1999999999999px;letter-spacing:0.45px;">/config/test2/test/myfile_副...</div><div class="t c" style="left:1242.4px;top:713.1999999999999px;letter-spacing:0.06px;text-indent:0.06px;width:84.29999999999995px;">37.43MB/s</div><div class="t c" style="left:1326.7px;top:713.1999999999999px;letter-spacing:-0.20px;text-indent:-0.20px;width:102.70000000000005px;">21s</div><svg style="left:135px;top:739.35px" width="12" height="15" viewBox="0 0 12 15"><path d="M0.3 1 Q0.3 0.3 1 0.3 H7.8 L11.7 4.2 V14 Q11.7 14.7 11 14.7 H1 Q0.3 14.7 0.3 14 Z" fill="#ececef"/><path d="M7.8 0.3 V3.6 Q7.8 4.2 8.4 4.2 H11.7" fill="#c4c4c8"/></svg><div class="t" style="left:154.2px;top:738.55px;letter-spacing:0.31px;">myfile_副本2.dat</div><div class="t c" style="left:408.6px;top:738.55px;letter-spacing:0.32px;text-indent:0.32px;width:106.0px;">In progress</div><div class="a" style="left:514.6px;top:738.55px;width:157.5px;height:17px;background:#10283a;"></div><div class="a" style="left:514.6px;top:738.55px;width:27.5px;height:17px;background:#4a86cf;"></div><div class="t c" style="left:514.6px;top:738.55px;letter-spacing:-0.40px;text-indent:-0.40px;width:157.5px;">17%</div><div class="t c" style="left:672.1px;top:738.55px;letter-spacing:-0.03px;text-indent:-0.03px;width:148.5px;">181.43MB / 1.00GB</div><div class="t" style="left:824.9px;top:738.55px;letter-spacing:0.41px;">/config/test/myfile_副本2.dat</div><div class="t" style="left:1036.0px;top:738.55px;letter-spacing:0.45px;">/config/test2/test/myfile_副...</div><div class="t c" style="left:1242.4px;top:738.55px;letter-spacing:0.07px;text-indent:0.07px;width:84.29999999999995px;">37.58MB/s</div><div class="t c" style="left:1326.7px;top:738.55px;letter-spacing:0.27px;text-indent:0.27px;width:102.70000000000005px;">22s</div><svg style="left:135px;top:764.7px" width="12" height="15" viewBox="0 0 12 15"><path d="M0.3 1 Q0.3 0.3 1 0.3 H7.8 L11.7 4.2 V14 Q11.7 14.7 11 14.7 H1 Q0.3 14.7 0.3 14 Z" fill="#ececef"/><path d="M7.8 0.3 V3.6 Q7.8 4.2 8.4 4.2 H11.7" fill="#c4c4c8"/></svg><div class="t" style="left:154.2px;top:763.9px;letter-spacing:0.29px;">myfile_副本3.dat</div><div class="t c" style="left:408.6px;top:763.9px;letter-spacing:0.32px;text-indent:0.32px;width:106.0px;">In progress</div><div class="a" style="left:514.6px;top:763.9px;width:157.5px;height:17px;background:#10283a;"></div><div class="a" style="left:514.6px;top:763.9px;width:28.5px;height:17px;background:#4a86cf;"></div><div class="t c" style="left:514.6px;top:763.9px;letter-spacing:-0.33px;text-indent:-0.33px;width:157.5px;">18%</div><div class="t c" style="left:672.1px;top:763.9px;letter-spacing:0.06px;text-indent:0.06px;width:148.5px;">189.52MB / 1.00GB</div><div class="t" style="left:824.9px;top:763.9px;letter-spacing:0.40px;">/config/test/myfile_副本3.dat</div><div class="t" style="left:1036.0px;top:763.9px;letter-spacing:0.45px;">/config/test2/test/myfile_副...</div><div class="t c" style="left:1242.4px;top:763.9px;letter-spacing:0.08px;text-indent:0.08px;width:84.29999999999995px;">37.24MB/s</div><div class="t c" style="left:1326.7px;top:763.9px;letter-spacing:0.27px;text-indent:0.27px;width:102.70000000000005px;">22s</div><svg style="left:135px;top:790.0500000000001px" width="12" height="15" viewBox="0 0 12 15"><path d="M0.3 1 Q0.3 0.3 1 0.3 H7.8 L11.7 4.2 V14 Q11.7 14.7 11 14.7 H1 Q0.3 14.7 0.3 14 Z" fill="#ececef"/><path d="M7.8 0.3 V3.6 Q7.8 4.2 8.4 4.2 H11.7" fill="#c4c4c8"/></svg><div class="t" style="left:154.2px;top:789.25px;letter-spacing:0.30px;">myfile_副本5.dat</div><div class="t c" style="left:408.6px;top:789.25px;letter-spacing:0.35px;text-indent:0.35px;width:106.0px;">Waiting</div><div class="a" style="left:514.6px;top:789.25px;width:157.5px;height:17px;background:#10283a;"></div><div class="t c" style="left:514.6px;top:789.25px;letter-spacing:0.20px;text-indent:0.20px;width:157.5px;">0%</div><div class="t c" style="left:672.1px;top:789.25px;letter-spacing:0.15px;text-indent:0.15px;width:148.5px;">0 B / 1.00GB</div><div class="t" style="left:824.9px;top:789.25px;letter-spacing:0.40px;">/config/test/myfile_副本5.dat</div><div class="t" style="left:1036.0px;top:789.25px;letter-spacing:0.45px;">/config/test2/test/myfile_副...</div><div class="t c" style="left:1242.4px;top:789.25px;width:84.29999999999995px;">-</div><div class="t c" style="left:1326.7px;top:789.25px;width:102.70000000000005px;">-</div><svg style="left:135px;top:815.4px" width="12" height="15" viewBox="0 0 12 15"><path d="M0.3 1 Q0.3 0.3 1 0.3 H7.8 L11.7 4.2 V14 Q11.7 14.7 11 14.7 H1 Q0.3 14.7 0.3 14 Z" fill="#ececef"/><path d="M7.8 0.3 V3.6 Q7.8 4.2 8.4 4.2 H11.7" fill="#c4c4c8"/></svg><div class="t" style="left:154.2px;top:814.5999999999999px;letter-spacing:0.26px;">myfile_副本7.dat</div><div class="t c" style="left:408.6px;top:814.5999999999999px;letter-spacing:0.35px;text-indent:0.35px;width:106.0px;">Waiting</div><div class="a" style="left:514.6px;top:814.5999999999999px;width:157.5px;height:17px;background:#10283a;"></div><div class="t c" style="left:514.6px;top:814.5999999999999px;letter-spacing:0.20px;text-indent:0.20px;width:157.5px;">0%</div><div class="t c" style="left:672.1px;top:814.5999999999999px;letter-spacing:0.15px;text-indent:0.15px;width:148.5px;">0 B / 1.00GB</div><div class="t" style="left:824.9px;top:814.5999999999999px;letter-spacing:0.39px;">/config/test/myfile_副本7.dat</div><div class="t" style="left:1036.0px;top:814.5999999999999px;letter-spacing:0.45px;">/config/test2/test/myfile_副...</div><div class="t c" style="left:1242.4px;top:814.5999999999999px;width:84.29999999999995px;">-</div><div class="t c" style="left:1326.7px;top:814.5999999999999px;width:102.70000000000005px;">-</div><svg style="left:0;top:0" width="1536" height="960"><path d="M1205.6 73.4 L1201.3 78 L1205.6 82.6 M1210.4 73.4 L1214.8 78 L1210.4 82.6" fill="none" stroke="#c9cad2" stroke-width="1.15"/><path d="M1228.5 73.2 Q1228.5 72.4 1229.3 72.4 H1232.8 L1234.3 74 H1241.7 Q1242.5 74 1242.5 74.8 V82.9 Q1242.5 83.7 1241.7 83.7 H1229.3 Q1228.5 83.7 1228.5 82.9 Z" fill="none" stroke="#c9cad2" stroke-width="1.2" stroke-linejoin="round"/><rect x="1257.4" y="71.2" width="10.9" height="13.6" rx="0.8" fill="none" stroke="#c9cad2" stroke-width="1.2"/><path d="M1259.9 75.7 H1266.1 M1259.9 80.7 H1266.1" stroke="#c9cad2" stroke-width="0.9"/><path d="M1259.9 78.1 H1266.1" stroke="#9a9ba5" stroke-width="1.3"/><circle cx="1268.8" cy="83.9" r="2.55" fill="#d0d1d8" stroke="#161a2d" stroke-width="0.5"/><circle cx="1290.5" cy="78" r="7.1" fill="none" stroke="#c9cad2" stroke-width="1.2"/><circle cx="1290.5" cy="78" r="3.5" fill="#d0d1d8"/><circle cx="1344.8" cy="74.6" r="3.55" fill="none" stroke="#c9cad2" stroke-width="1.2"/><path d="M1344.8 78.2 V85.3 M1344.8 81.8 H1347.5 M1344.8 83.7 H1347.5" fill="none" stroke="#c9cad2" stroke-width="1.2"/><circle cx="1369" cy="73.8" r="2.3" fill="none" stroke="#c9cad2" stroke-width="1.15"/><circle cx="1375.6" cy="75.8" r="2.05" fill="none" stroke="#c9cad2" stroke-width="1.15"/><path d="M1369 76.1 V85.3 M1369 81.6 H1373.6 Q1375.6 81.6 1375.6 79.6 V77.9" fill="none" stroke="#c9cad2" stroke-width="1.2"/><circle cx="1398.8" cy="76.6" r="5.1" fill="none" stroke="#c9cad2" stroke-width="1.2"/><path d="M1402.5 80.3 L1406.6 84.2" stroke="#c9cad2" stroke-width="1.2"/><path d="M1425.12 73.71 L1426.12 73.17 L1426.48 71.65 L1428.72 71.65 L1429.08 73.17 L1430.07 73.71 L1431.04 74.31 L1432.54 73.85 L1433.66 75.79 L1432.52 76.86 L1432.55 78.00 L1432.52 79.14 L1433.66 80.21 L1432.54 82.15 L1431.04 81.69 L1430.07 82.29 L1429.08 82.83 L1428.72 84.35 L1426.48 84.35 L1426.12 82.83 L1425.12 82.29 L1424.16 81.69 L1422.66 82.15 L1421.54 80.21 L1422.68 79.14 L1422.65 78.00 L1422.68 76.86 L1421.54 75.79 L1422.66 73.85 L1424.16 74.31 Z" fill="none" stroke="#c9cad2" stroke-width="1.2" stroke-linejoin="round"/><circle cx="1427.6" cy="78.0" r="1.95" fill="none" stroke="#c9cad2" stroke-width="1.2"/><path d="M712.7 145.5 C715.4 141.1 718.0 140.2 720.6 140.2 C723.2 140.2 725.8000000000001 141.1 728.5 145.5 C725.8000000000001 149.9 723.2 150.8 720.6 150.8 C718.0 150.8 715.4 149.9 712.7 145.5 Z" fill="none" stroke="#c9cad2" stroke-width="1.15"/><circle cx="720.6" cy="145.5" r="2.25" fill="none" stroke="#c9cad2" stroke-width="1.15"/><path d="M742.25 146.80 L742.25 145.60 A5.75 5.75 0 0 1 751.70 141.20 M753.75 144.40 L753.75 145.60 A5.75 5.75 0 0 1 744.46 150.13" fill="none" stroke="#c9cad2" stroke-width="1.15"/><path d="M739.65 145.00 L742.25 147.60 L744.85 145.00 M751.15 146.20 L753.75 143.60 L756.35 146.20" fill="none" stroke="#c9cad2" stroke-width="1.15" stroke-linejoin="round"/><path d="M1391.6999999999998 145.5 C1394.3999999999999 141.1 1397.0 140.2 1399.6 140.2 C1402.1999999999998 140.2 1404.8 141.1 1407.5 145.5 C1404.8 149.9 1402.1999999999998 150.8 1399.6 150.8 C1397.0 150.8 1394.3999999999999 149.9 1391.6999999999998 145.5 Z" fill="none" stroke="#c9cad2" stroke-width="1.15"/><circle cx="1399.6" cy="145.5" r="2.25" fill="none" stroke="#c9cad2" stroke-width="1.15"/><path d="M1421.25 146.80 L1421.25 145.60 A5.75 5.75 0 0 1 1430.70 141.20 M1432.75 144.40 L1432.75 145.60 A5.75 5.75 0 0 1 1423.46 150.13" fill="none" stroke="#c9cad2" stroke-width="1.15"/><path d="M1418.65 145.00 L1421.25 147.60 L1423.85 145.00 M1430.15 146.20 L1432.75 143.60 L1435.35 146.20" fill="none" stroke="#c9cad2" stroke-width="1.15" stroke-linejoin="round"/></svg></body></html>
